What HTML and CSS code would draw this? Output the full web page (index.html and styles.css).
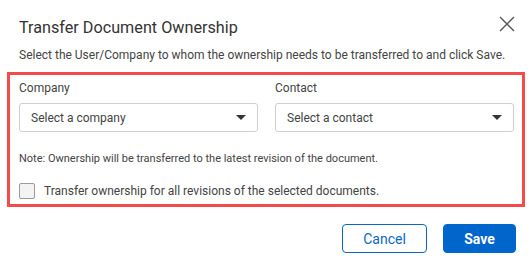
FILE: index.html
```html
<!DOCTYPE html>
<html lang="en">
<head>
    <meta charset="UTF-8">
    <meta name="viewport" content="width=device-width, initial-scale=1.0">
    <title>Transfer Document Ownership</title>
    <link rel="stylesheet" href="styles.css">
</head>
<body>
    <div class="dialog">
        <div class="dialog-header">
            <h2 class="dialog-title">Transfer Document Ownership</h2>
            <button class="close-btn" aria-label="Close">
                <svg width="16" height="16" viewBox="0 0 16 16">
                    <path d="M1 1 L15 15 M15 1 L1 15" stroke="#555" stroke-width="1.4" fill="none"/>
                </svg>
            </button>
        </div>
        <p class="intro">Select the User/Company to whom the ownership needs to be transferred to and click Save.</p>

        <div class="transfer-box">
            <div class="fields">
                <div class="field">
                    <label class="field-label">Company</label>
                    <div class="select">
                        <span>Select a company</span>
                        <span class="caret"></span>
                    </div>
                </div>
                <div class="field">
                    <label class="field-label">Contact</label>
                    <div class="select">
                        <span>Select a contact</span>
                        <span class="caret"></span>
                    </div>
                </div>
            </div>
            <p class="note">Note: Ownership will be transferred to the latest revision of the document.</p>
            <label class="check-row">
                <span class="checkbox"></span>
                <span>Transfer ownership for all revisions of the selected documents.</span>
            </label>
        </div>

        <div class="dialog-footer">
            <button class="btn btn-outline">Cancel</button>
            <button class="btn btn-primary">Save</button>
        </div>
    </div>
</body>
</html>
```

FILE: styles.css
```css
/* Transfer ownership dialog */
body {
    margin: 0;
    padding: 0;
    background-color: #ffffff;
    font-family: Roboto, "Liberation Sans", Arial, sans-serif;
    color: #444;
}
.dialog {
    width: 532px;
    height: 267px;
    box-sizing: border-box;
    padding: 0 7px;
}
.dialog-header {
    display: flex;
    justify-content: space-between;
    align-items: flex-start;
    padding: 17px 10px 0 12px;
}
.dialog-title {
    margin: 0;
    font-size: 16.2px;
    font-weight: 400;
    line-height: 22px;
    color: #333;
}
.close-btn {
    margin-top: -1px;
    padding: 0;
    border: none;
    background: none;
    width: 16px;
    height: 16px;
}
.close-btn svg {
    display: block;
}
.intro {
    margin: 8px 0 9px 12px;
    font-size: 12px;
    line-height: 16px;
}
.transfer-box {
    border: 3px solid #f54a4a;
    padding: 5px 8px 5px 9px;
}
.fields {
    display: grid;
    grid-template-columns: 1fr 1fr;
    gap: 17px;
}
.field-label {
    display: block;
    font-size: 12px;
    line-height: 16px;
    margin-bottom: 7px;
}
.select {
    display: flex;
    justify-content: space-between;
    align-items: center;
    height: 29px;
    box-sizing: border-box;
    padding: 0 11px 0 11px;
    border: 1px solid #cfcfcf;
    border-radius: 3px;
    font-size: 12px;
}
.caret {
    width: 0;
    height: 0;
    border-left: 5px solid transparent;
    border-right: 5px solid transparent;
    border-top: 5px solid #333;
}
.note {
    margin: 19px 0 16px 0;
    font-size: 11px;
    line-height: 16px;
}
.check-row {
    display: flex;
    align-items: center;
    gap: 9px;
    font-size: 12px;
    line-height: 16px;
}
.checkbox {
    width: 16px;
    height: 16px;
    box-sizing: border-box;
    border: 1px solid #9a9a9a;
    border-radius: 2px;
    background-color: #f3f3f3;
}
.dialog-footer {
    display: flex;
    justify-content: flex-end;
    gap: 16px;
    padding: 17px 9px 0 0;
}
.btn {
    height: 29px;
    border-radius: 4px;
    font-family: Roboto, "Liberation Sans", Arial, sans-serif;
    font-size: 14px;
    cursor: pointer;
}
.btn-outline {
    width: 85px;
    border: 1px solid #0a66c8;
    background-color: #fff;
    color: #0a66c8;
}
.btn-primary {
    width: 73px;
    border: 1px solid #0066cc;
    background-color: #0066cc;
    color: #fff;
    font-weight: 700;
}
```
